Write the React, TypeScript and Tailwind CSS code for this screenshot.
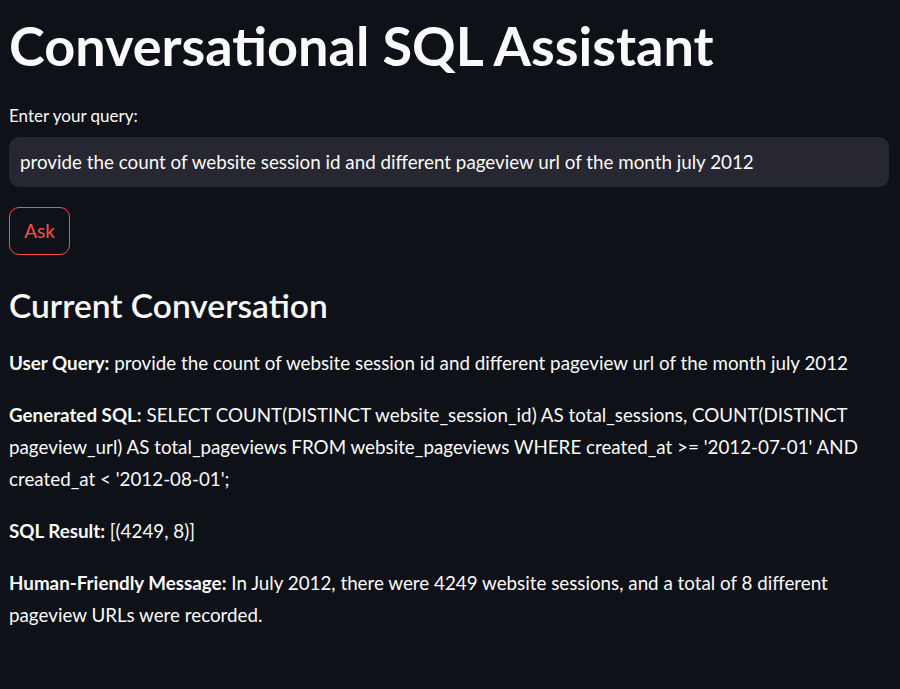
import { useState } from "react";

const messages = [
  {
    label: "User Query:",
    text: "provide the count of website session id and different pageview url of the month july 2012",
  },
  {
    label: "Generated SQL:",
    text: "SELECT COUNT(DISTINCT website_session_id) AS total_sessions, COUNT(DISTINCT pageview_url) AS total_pageviews FROM website_pageviews WHERE created_at >= '2012-07-01' AND created_at < '2012-08-01';",
  },
  { label: "SQL Result:", text: "[(4249, 8)]" },
  {
    label: "Human-Friendly Message:",
    text: "In July 2012, there were 4249 website sessions, and a total of 8 different pageview URLs were recorded.",
  },
];

export default function App() {
  const [query, setQuery] = useState(
    "provide the count of website session id and different pageview url of the month july 2012"
  );

  return (
    <div className="min-h-screen bg-[#0e1117] text-[#fafafa] pl-[9px] pr-[11px] font-['Lato','Liberation_Sans',sans-serif]">
      <h1 className="pt-[14px] pb-[26px] text-[54px] leading-[1.2] font-bold">
        Conversational SQL Assistant
      </h1>

      <label className="block text-[17px] leading-[22px] mb-[10px]">Enter your query:</label>
      <input
        value={query}
        onChange={(e) => setQuery(e.target.value)}
        className="w-full h-[50px] rounded-[10px] bg-[#262730] px-[11px] text-[18.8px] text-[#fafafa] outline-none"
      />

      <button className="mt-[20px] h-[48px] w-[61px] rounded-[10px] border border-[#ff4b4b] text-[19px] text-[#ff4b4b]">
        Ask
      </button>

      <h3 className="mt-[30px] mb-[22px] text-[33.5px] leading-[1.2] font-semibold">Current Conversation</h3>

      <div className="text-[18.8px] leading-[32px]">
        {messages.map((m) => (
          <p key={m.label} className="mb-[20px]">
            <strong className="font-bold">{m.label}</strong> {m.text}
          </p>
        ))}
      </div>
    </div>
  );
}
